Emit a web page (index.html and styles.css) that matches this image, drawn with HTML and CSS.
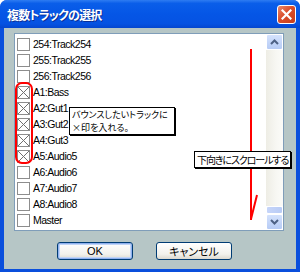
FILE: index.html
```html
<!DOCTYPE html>
<html lang="ja">
<head>
    <meta charset="UTF-8">
    <title>複数トラックの選択</title>
    <link rel="stylesheet" href="styles.css">
</head>
<body>
    <div class="window">
        <div class="titlebar">
            <span class="title">複数トラックの選択</span>
            <span class="close">
                <svg width="11" height="11" viewBox="0 0 11 11"><path d="M1.5 1.5 L9.5 9.5 M9.5 1.5 L1.5 9.5" stroke="#fff" stroke-width="2.2" stroke-linecap="square"/></svg>
            </span>
        </div>
        <div class="body">
            <div class="listbox">
                <ul class="items">
                    <li><span class="check"></span>254:Track254</li>
                    <li><span class="check"></span>255:Track255</li>
                    <li><span class="check"></span>256:Track256</li>
                    <li><span class="check checked"></span>A1:Bass</li>
                    <li><span class="check checked"></span>A2:Gut1</li>
                    <li><span class="check checked"></span>A3:Gut2</li>
                    <li><span class="check checked"></span>A4:Gut3</li>
                    <li><span class="check checked"></span>A5:Audio5</li>
                    <li><span class="check"></span>A6:Audio6</li>
                    <li><span class="check"></span>A7:Audio7</li>
                    <li><span class="check"></span>A8:Audio8</li>
                    <li><span class="check"></span>Master</li>
                </ul>
                <div class="scrollbar">
                    <div class="sb-btn">
                        <svg width="9" height="6" viewBox="0 0 9 6"><path d="M1 5 L4.5 1.5 L8 5" fill="none" stroke="#4d6185" stroke-width="2"/></svg>
                    </div>
                    <div class="sb-track"></div>
                    <div class="sb-thumb"></div>
                    <div class="sb-btn">
                        <svg width="9" height="6" viewBox="0 0 9 6"><path d="M1 1 L4.5 4.5 L8 1" fill="none" stroke="#4d6185" stroke-width="2"/></svg>
                    </div>
                </div>
            </div>
            <div class="buttons">
                <button class="btn default">OK</button>
                <button class="btn">キャンセル</button>
            </div>
        </div>

        <!-- annotations drawn over the dialog -->
        <div class="ring"></div>
        <svg class="arrow" width="20" height="180" viewBox="0 0 20 180">
            <path d="M2 1 L2 172 M8 147 L2 171" fill="none" stroke="#f00" stroke-width="2"/>
        </svg>
        <div class="note note-check">バウンスしたいトラックに<br>×印を入れる。</div>
        <div class="note note-scroll">下向きにスクロールする</div>
    </div>
</body>
</html>
```
FILE: styles.css
```css
body {
    margin: 0;
    font-family: "Liberation Sans", "Noto Sans CJK JP", sans-serif;
}
.window {
    position: relative;
    width: 300px;
    height: 272px;
    background-color: #0a4fdc;
    border-radius: 7px 7px 0 0;
    display: flex;
    flex-direction: column;
    overflow: hidden;
}
.titlebar {
    height: 28px;
    flex: none;
    display: flex;
    align-items: center;
    justify-content: space-between;
    padding: 0 4px 0 7px;
    background: linear-gradient(#2e7cf2 0%, #0a5ee9 12%, #0556e6 50%, #0552e2 85%, #0446cf 100%);
}
.title {
    color: white;
    font-family: "Noto Sans CJK JP", sans-serif;
    font-weight: bold;
    font-size: 12px;
    letter-spacing: -0.8px;
    text-shadow: 1px 1px 0 #0a2f96;
    font-feature-settings: "palt";
}
.close {
    width: 17px;
    height: 17px;
    border: 1px solid #fff;
    border-radius: 3px;
    background: linear-gradient(135deg, #e98a6d 0%, #da4e2c 45%, #c53d1a 100%);
    display: flex;
    align-items: center;
    justify-content: center;
}
.body {
    flex: 1;
    margin: 0 4px 3px 4px;
    background-color: #b6c6c6;
    padding: 5px 0 0 10px;
}
.listbox {
    width: 270px;
    height: 198px;
    box-sizing: border-box;
    border: 1px solid #7f9db9;
    background-color: white;
    display: flex;
}
.items {
    flex: 1;
    list-style: none;
    margin: 0;
    padding: 2px 0 0 2px;
}
.items li {
    height: 16px;
    display: flex;
    align-items: center;
    font-size: 10.5px;
    letter-spacing: -0.5px;
    color: #000;
}
.check {
    width: 13px;
    height: 13px;
    box-sizing: border-box;
    border: 1px solid #8d8d8d;
    background-color: #fff;
    margin-right: 3px;
}
.check.checked {
    background:
        linear-gradient(45deg, transparent 46%, #707070 46%, #707070 54%, transparent 54%),
        linear-gradient(-45deg, transparent 46%, #707070 46%, #707070 54%, transparent 54%),
        #fff;
}
.scrollbar {
    width: 17px;
    display: flex;
    flex-direction: column;
}
.sb-btn {
    height: 16px;
    flex: none;
    box-sizing: border-box;
    border: 1px solid #fff;
    border-radius: 2px;
    background: linear-gradient(#d4e2fc, #b6cbf5);
    display: flex;
    align-items: center;
    justify-content: center;
}
.sb-track {
    flex: 1;
    background: linear-gradient(90deg, #eeede5, #f7f7f3 60%, #fbfbf8);
}
.sb-thumb {
    height: 8px;
    box-sizing: border-box;
    border: 1px solid #fff;
    border-radius: 2px;
    background: linear-gradient(90deg, #c6d5f9, #b8cbf5);
}
.buttons {
    display: flex;
    gap: 23px;
    padding: 11px 0 0 43px;
}
.btn {
    width: 76px;
    height: 18px;
    padding: 0;
    border: 1px solid #003c74;
    border-radius: 3px;
    background: linear-gradient(#ffffff, #f2f1ec 70%, #dcd9cf);
    font-family: "Liberation Sans", "Noto Sans CJK JP", sans-serif;
    font-size: 11px;
    font-feature-settings: "palt";
    color: #000;
}
.btn.default {
    box-shadow: inset 0 0 0 1px #8fb1ef, inset 0 0 0 2px #c0d4f6;
}
.ring {
    position: absolute;
    left: 15px;
    top: 82px;
    width: 14px;
    height: 78px;
    border: 2px solid #f00;
    border-radius: 7px;
}
.arrow {
    position: absolute;
    left: 249px;
    top: 48px;
}
.note {
    position: absolute;
    background-color: #fff;
    border: 1px solid #000;
    box-shadow: 1px 1px 0 #000;
    font-family: "Noto Sans CJK JP", sans-serif;
    font-size: 10px;
    line-height: 11px;
    letter-spacing: -0.7px;
    font-feature-settings: "palt";
    white-space: nowrap;
    color: #000;
}
.note-check {
    left: 69px;
    top: 107px;
    width: 100px;
    padding: 0 2px;
    font-size: 9px;
    line-height: 13px;
    letter-spacing: 0;
}
.note-scroll {
    left: 194px;
    top: 151px;
    padding: 2px 2px 2px 2px;
    letter-spacing: -1.1px;
}
```
